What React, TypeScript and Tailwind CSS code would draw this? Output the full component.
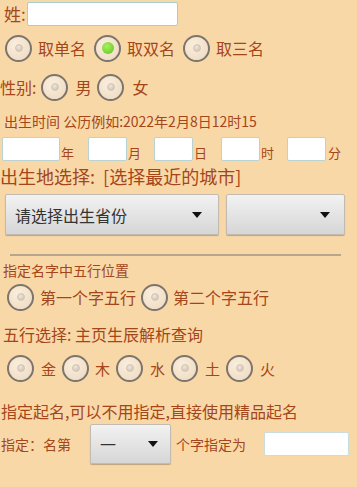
import React from "react";

const Radio = ({ checked = false }: { checked?: boolean }) => (
  <span className="relative inline-flex h-[27px] w-[27px] shrink-0 items-center justify-center rounded-full border-[2px] border-[#7d746c] bg-[radial-gradient(circle_at_40%_35%,#fbeedd,#ecd9bf)]">
    {checked ? (
      <span className="h-[12px] w-[12px] rounded-full bg-[radial-gradient(circle_at_40%_35%,#a8f060,#5fc41c)]" />
    ) : (
      <span className="h-[8px] w-[8px] rounded-full bg-[radial-gradient(circle_at_40%_35%,#efe6da,#c9bcac)] border border-[#d4c6b4]" />
    )}
  </span>
);

const Arrow = () => (
  <svg width="10" height="6" viewBox="0 0 10 6">
    <polygon points="0,0 10,0 5,6" fill="#111" />
  </svg>
);

const Box = ({ w }: { w: string }) => (
  <div className={`${w} h-[24px] bg-white border border-[#b9d3d3] rounded-[2px]`} />
);

export default function App() {
  return (
    <div
      className="w-[357px] h-[487px] overflow-hidden bg-[#f9d8a8] text-[#a4461a]"
      style={{ fontFamily: '"Noto Sans CJK SC", "Noto Sans", sans-serif' }}
    >
      {/* surname */}
      <div className="flex items-center h-[26px] pt-[1px]">
        <span className="ml-[4px] text-[17px] leading-none">姓:</span>
        <div className="ml-[1px] w-[151px] h-[24px] bg-white border border-[#a9cccc] rounded-[2px]" />
      </div>

      {/* name length */}
      <div className="flex items-center h-[38px] mt-[3px] text-[16px] leading-none">
        <span className="ml-[5px]"><Radio /></span>
        <span className="ml-[6px]">取单名</span>
        <span className="ml-[8px]"><Radio checked /></span>
        <span className="ml-[6px]">取双名</span>
        <span className="ml-[8px]"><Radio /></span>
        <span className="ml-[6px]">取三名</span>
      </div>

      {/* gender */}
      <div className="flex items-center h-[28px] mt-[6px] text-[16px] leading-none">
        <span className="ml-[0px]">性别:</span>
        <span className="ml-[5px]"><Radio /></span>
        <span className="ml-[7px]">男</span>
        <span className="ml-[6px]"><Radio /></span>
        <span className="ml-[8px]">女</span>
      </div>

      {/* birth time */}
      <div className="mt-[13px] ml-[4px] text-[14px] leading-none h-[15px] whitespace-nowrap">
        出生时间 公历例如:2022年2月8日12时15
      </div>

      <div className="flex items-center h-[26px] mt-[7px] text-[13px] leading-none">
        <div className="ml-[2px]"><Box w="w-[58px]" /></div>
        <span className="ml-[1px] mt-[6px]">年</span>
        <div className="ml-[14px]"><Box w="w-[39px]" /></div>
        <span className="ml-[1px] mt-[6px]">月</span>
        <div className="ml-[13px]"><Box w="w-[39px]" /></div>
        <span className="ml-[1px] mt-[6px]">日</span>
        <div className="ml-[14px]"><Box w="w-[39px]" /></div>
        <span className="ml-[1px] mt-[6px]">时</span>
        <div className="ml-[13px]"><Box w="w-[39px]" /></div>
        <span className="ml-[2px] mt-[6px]">分</span>
      </div>

      <div className="mt-[1px] h-[26px] text-[18px] leading-[26px] whitespace-nowrap">
        出生地选择:&nbsp;&nbsp;[选择最近的城市]
      </div>

      {/* selects */}
      <div className="flex mt-[5px] h-[42px]">
        <div className="ml-[5px] w-[214px] h-[41px] flex items-center justify-between rounded-[2px] border border-[#c2bbb2] bg-[linear-gradient(#f2f2f2,#d6d6d6)] shadow-[0_1px_1px_rgba(0,0,0,0.25)]">
          <span className="ml-[9px] text-[16px] text-[#333] leading-none">请选择出生省份</span>
          <span className="mr-[16px]"><Arrow /></span>
        </div>
        <div className="ml-[7px] w-[119px] h-[41px] flex items-center justify-end rounded-[2px] border border-[#c2bbb2] bg-[linear-gradient(#f2f2f2,#d6d6d6)] shadow-[0_1px_1px_rgba(0,0,0,0.25)]">
          <span className="mr-[14px]"><Arrow /></span>
        </div>
      </div>

      <div className="ml-[10px] mt-[18px] w-[331px] h-[2px] bg-[#b9a58e]" />

      <div className="mt-[7px] ml-[3px] text-[14px] leading-none h-[15px]">指定名字中五行位置</div>

      <div className="flex items-center h-[28px] mt-[5px] text-[16px] leading-none">
        <span className="ml-[7px]"><Radio /></span>
        <span className="ml-[6px]">第一个字五行</span>
        <span className="ml-[5px]"><Radio /></span>
        <span className="ml-[5px]">第二个字五行</span>
      </div>

      <div className="mt-[15px] ml-[3px] text-[16px] leading-none h-[17px] whitespace-nowrap">五行选择: 主页生辰解析查询</div>

      <div className="flex items-center h-[28px] mt-[11px] text-[15px] leading-none">
        <span className="ml-[7px]"><Radio /></span>
        <span className="ml-[7px]">金</span>
        <span className="ml-[6px]"><Radio /></span>
        <span className="ml-[6px]">木</span>
        <span className="ml-[6px]"><Radio /></span>
        <span className="ml-[7px]">水</span>
        <span className="ml-[6px]"><Radio /></span>
        <span className="ml-[7px]">土</span>
        <span className="ml-[6px]"><Radio /></span>
        <span className="ml-[7px]">火</span>
      </div>

      <div className="mt-[21px] ml-[1px] text-[16px] leading-none h-[18px] whitespace-nowrap">指定起名,可以不用指定,直接使用精品起名</div>

      <div className="flex items-center h-[42px] mt-[2px] text-[14px] leading-none">
        <span className="ml-[1px] w-[89px]">指定：名第</span>
        <div className="w-[81px] h-[40px] flex items-center justify-between rounded-[2px] border border-[#c2bbb2] bg-[linear-gradient(#f2f2f2,#d6d6d6)] shadow-[0_1px_1px_rgba(0,0,0,0.25)]">
          <span className="ml-[9px] text-[16px] text-[#333]">一</span>
          <span className="mr-[12px]"><Arrow /></span>
        </div>
        <span className="ml-[5px]">个字指定为</span>
        <div className="ml-[18px] w-[85px] h-[24px] bg-white border border-[#c8dede] rounded-[2px]" />
      </div>
    </div>
  );
}
